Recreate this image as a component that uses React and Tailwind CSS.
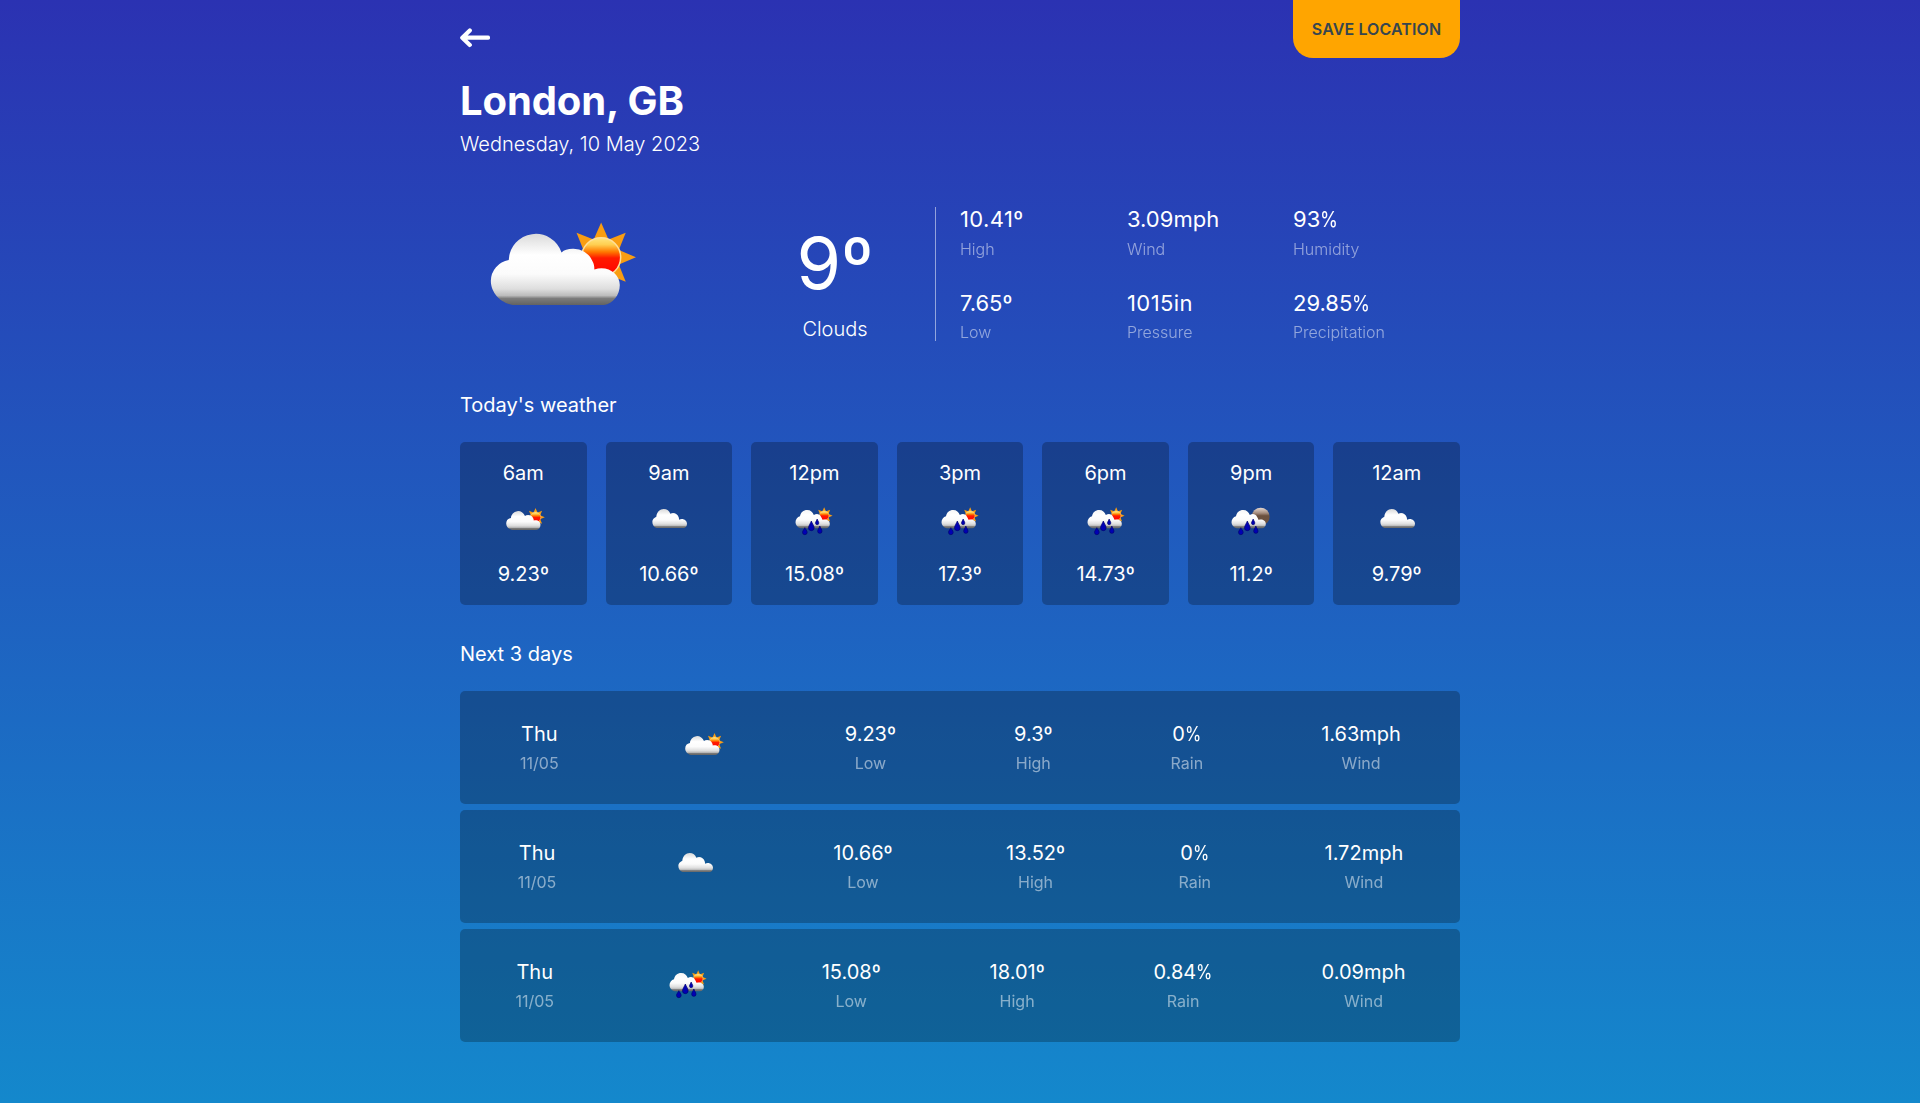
import React, { useId } from "react";

const CLOUD_SUN =
  "M24.600 91.600 A17 17 0 0 1 38.900 75 A21.600 21.600 0 0 1 81 69 C83 67 86 66 90 66 A16.500 16.500 0 0 1 105.500 75.500 C107 78 107.200 80 107.200 82.500 C118 79 127.500 86 127.500 95 C127.500 103 122 110 115 111 L42 111 C32 109 24.600 101 24.600 91.600 Z";
const CLOUD_PLAIN =
  "M25 86 C25 79 30 74 37 71 C38 57 48 48 59 48 C69 48 76 54 79 62 C89 57 101 62 104 73 C105 75 105 77 105 80 C117 74 129 82 129 92 C129 99 125 104 120 105 L38 105 C30 103 25 95 25 86 Z";
const CLOUD_RAIN =
  "M16.500 88 C16.500 79 22 72 30 70 C32 58 40 51 51.500 51 C62 51 68 57 71.500 66 C80 61 89 63 93 71 C95 75 97 78 98 81 C108 77 119.500 83 119.500 93 C119.500 101 114 105 108 106 L32 106 C23 104 16.500 97 16.500 88 Z";

function Sun({ cx, cy, r, id }) {
  const rays = [-135, -90, -45, 0, 45];
  return (
    <g transform={`translate(${cx} ${cy})`}>
      {rays.map((a) => (
        <path
          key={a}
          d={`M${r * 0.85} ${-r * 0.4} L${r * 1.78} 0 L${r * 0.85} ${r * 0.4} Z`}
          transform={`rotate(${a})`}
          fill="#f99d12"
        />
      ))}
      <circle r={r} fill={`url(#${id}-sun)`} stroke="#ffdf9a" strokeWidth="1.2" />
    </g>
  );
}

function Drop({ x, top, bottom, w }) {
  const r = w / 2;
  const c = bottom - r;
  return (
    <path
      d={`M${x} ${top} C${x + 1} ${top + 4} ${x + r} ${c - r * 0.7} ${x + r} ${c} A${r} ${r} 0 0 1 ${x - r} ${c} C${x - r} ${c - r * 0.7} ${x - 1} ${top + 4} ${x} ${top} Z`}
      fill="#0000b4"
      stroke="#00006e"
      strokeWidth="2"
    />
  );
}

function WeatherIcon({ kind, className }) {
  const id = useId().replace(/[^a-zA-Z0-9]/g, "");
  const rain = kind === "rain" || kind === "rain-night";
  const cloud = rain ? CLOUD_RAIN : kind === "cloud" ? CLOUD_PLAIN : CLOUD_SUN;
  const top = kind === "sun" ? 52 : 47;
  const bottom = kind === "sun" ? 111 : 106;
  return (
    <svg viewBox={kind === "rain" ? "-3 0 150 150" : "0 0 150 150"} className={className} aria-hidden="true">
      <defs>
        <linearGradient id={`${id}-cloud`} gradientUnits="userSpaceOnUse" x1="0" y1={top} x2="0" y2={bottom}>
          <stop offset="0" stopColor={rain ? "#f4f4f4" : "#d6d6d6"} />
          <stop offset="0.32" stopColor="#ffffff" />
          <stop offset="0.58" stopColor="#fbfbfb" />
          <stop offset="0.78" stopColor="#dedede" />
          <stop offset="0.87" stopColor="#bcbcbc" />
          <stop offset="0.91" stopColor="#7c7c7c" />
          <stop offset="1" stopColor="#626262" />
        </linearGradient>
        <linearGradient id={`${id}-sun`} x1="0" y1="0" x2="0" y2="1">
          <stop offset="0" stopColor="#ffe680" />
          <stop offset="0.18" stopColor="#ffce50" />
          <stop offset="0.36" stopColor="#ff7a00" />
          <stop offset="0.52" stopColor="#ff1a00" />
          <stop offset="1" stopColor="#ff0000" />
        </linearGradient>
        <linearGradient id={`${id}-moon`} x1="0" y1="0" x2="0" y2="1">
          <stop offset="0" stopColor="#e6d8d0" />
          <stop offset="0.3" stopColor="#a58d7e" />
          <stop offset="0.45" stopColor="#6b503e" />
          <stop offset="1" stopColor="#6d5443" />
        </linearGradient>
      </defs>
      {kind === "sun" && <Sun cx={112.6} cy={72.8} r={15.6} id={id} />}
      {kind === "rain" && <Sun cx={102.5} cy={68} r={14.2} id={id} />}
      {kind === "rain-night" && <circle cx="104" cy="71" r="27" fill={`url(#${id}-moon)`} />}
      <path d={cloud} fill={`url(#${id}-cloud)`} />
      {rain && (
        <g>
          <Drop x={64} top={84} bottom={113} w={17} />
          <Drop x={44.5} top={104} bottom={125} w={14} />
          <Drop x={81.5} top={78} bottom={95} w={10} />
          <Drop x={89.5} top={99} bottom={121} w={13} />
        </g>
      )}
    </svg>
  );
}

const details = [
  ["10.41º", "High"],
  ["3.09mph", "Wind"],
  ["93%", "Humidity"],
  ["7.65º", "Low"],
  ["1015in", "Pressure"],
  ["29.85%", "Precipitation"],
];

const hours = [
  ["6am", "sun", "9.23º"],
  ["9am", "cloud", "10.66º"],
  ["12pm", "rain", "15.08º"],
  ["3pm", "rain", "17.3º"],
  ["6pm", "rain", "14.73º"],
  ["9pm", "rain-night", "11.2º"],
  ["12am", "cloud", "9.79º"],
];

const days = [
  { icon: "sun", low: "9.23º", high: "9.3º", rain: "0%", wind: "1.63mph" },
  { icon: "cloud", low: "10.66º", high: "13.52º", rain: "0%", wind: "1.72mph" },
  { icon: "rain", low: "15.08º", high: "18.01º", rain: "0.84%", wind: "0.09mph" },
];

// Percent signs are set slightly condensed next to their figures.
function Value({ children }) {
  if (!children.endsWith("%")) return children;
  return (
    <>
      {children.slice(0, -1)}
      <span className="-mr-[0.16em] inline-block origin-left scale-x-[0.83]">%</span>
    </>
  );
}

function Stat({ value, label }) {
  return (
    <div className="flex flex-col items-center">
      <span className="text-xl leading-6"><Value>{value}</Value></span>
      <span className="mt-[7px] text-base leading-5 opacity-50">{label}</span>
    </div>
  );
}

export default function App() {
  return (
    <div className="h-[1103px] overflow-hidden bg-linear-to-b/srgb from-[#2b32b2] to-[#1488cc] font-[Inter,sans-serif] text-white">
      <main className="mx-auto w-[1000px]">
        <header className="flex h-[58px] items-start justify-between">
          <button className="mt-7" aria-label="Back">
            <svg viewBox="0 0 30 20" className="h-5 w-[30px]" fill="none" stroke="currentColor" strokeWidth="4.200" strokeLinecap="round" strokeLinejoin="round">
              <path d="M28 9.700H3M9.800 2.500L2.300 9.700L9.800 16.900" />
            </svg>
          </button>
          <button className="h-[58px] w-[167px] rounded-b-[20px] bg-[#ffa500] text-base font-semibold tracking-[0.1px] text-[#36454f]">
            SAVE LOCATION
          </button>
        </header>

        <h1 className="mt-[19px] text-[40px] leading-[48px] font-bold tracking-[-0.1px]">London, GB</h1>
        <p className="mt-[7px] text-xl leading-6 font-light">Wednesday, 10 May 2023</p>

        <section className="mt-[51px] flex h-[134px]">
          <div className="w-[281px]">
            <WeatherIcon kind="sun" className="-mt-[41px] h-[188px] w-[188px] blur-[0.7px]" />
          </div>
          <div className="flex w-[188px] flex-col items-center pt-3">
            <span className="text-[72px] leading-[87px]">9º</span>
            <span className="mt-[11px] text-xl leading-6 font-light">Clouds</span>
          </div>
          <div className="w-[6px]" />
          <div className="-mt-px flex flex-1">
            <div className="mt-px w-px bg-white/50" />
            <div className="grid h-[136px] flex-1 grid-cols-[167px_166px_1fr] content-between pl-6">
              {details.map(([value, label], i) => (
                <div key={label} className="flex flex-col">
                  <span className={i === 0 || i === 4 ? "text-[22px] leading-[27px] tracking-[0.4px]" : "text-[22px] leading-[27px]"}>
                    <Value>{value}</Value>
                  </span>
                  <span className={i < 3 ? "mt-[6px] text-base leading-5 font-light opacity-50" : "mt-[5px] text-base leading-5 font-light opacity-50"}>
                    {label}
                  </span>
                </div>
              ))}
            </div>
          </div>
        </section>

        <h2 className="mt-[52px] text-xl leading-6">Today's weather</h2>
        <section className="mt-[25px] flex justify-between">
          {hours.map(([time, icon, temp]) => (
            <article key={time} className="flex h-[163px] w-[126.600px] flex-col items-center rounded-[5px] bg-black/25 pt-[19px] text-xl leading-6">
              <span>{time}</span>
              <WeatherIcon kind={icon} className="mt-2 h-[50px] w-[50px]" />
              <span className="mt-[19px]">{temp}</span>
            </article>
          ))}
        </section>

        <h2 className="mt-[37px] text-xl leading-6">Next 3 days</h2>
        <section className="mt-[25px] flex flex-col gap-1.5">
          {days.map((d) => (
            <article key={d.icon} className="flex h-[113px] items-start justify-around rounded-[5px] bg-black/25 pt-[31px] pl-px">
              <Stat value="Thu" label="11/05" />
              <WeatherIcon kind={d.icon} className="-mt-[4px] h-[50px] w-[50px]" />
              <Stat value={d.low} label="Low" />
              <Stat value={d.high} label="High" />
              <Stat value={d.rain} label="Rain" />
              <Stat value={d.wind} label="Wind" />
            </article>
          ))}
        </section>
      </main>
    </div>
  );
}
